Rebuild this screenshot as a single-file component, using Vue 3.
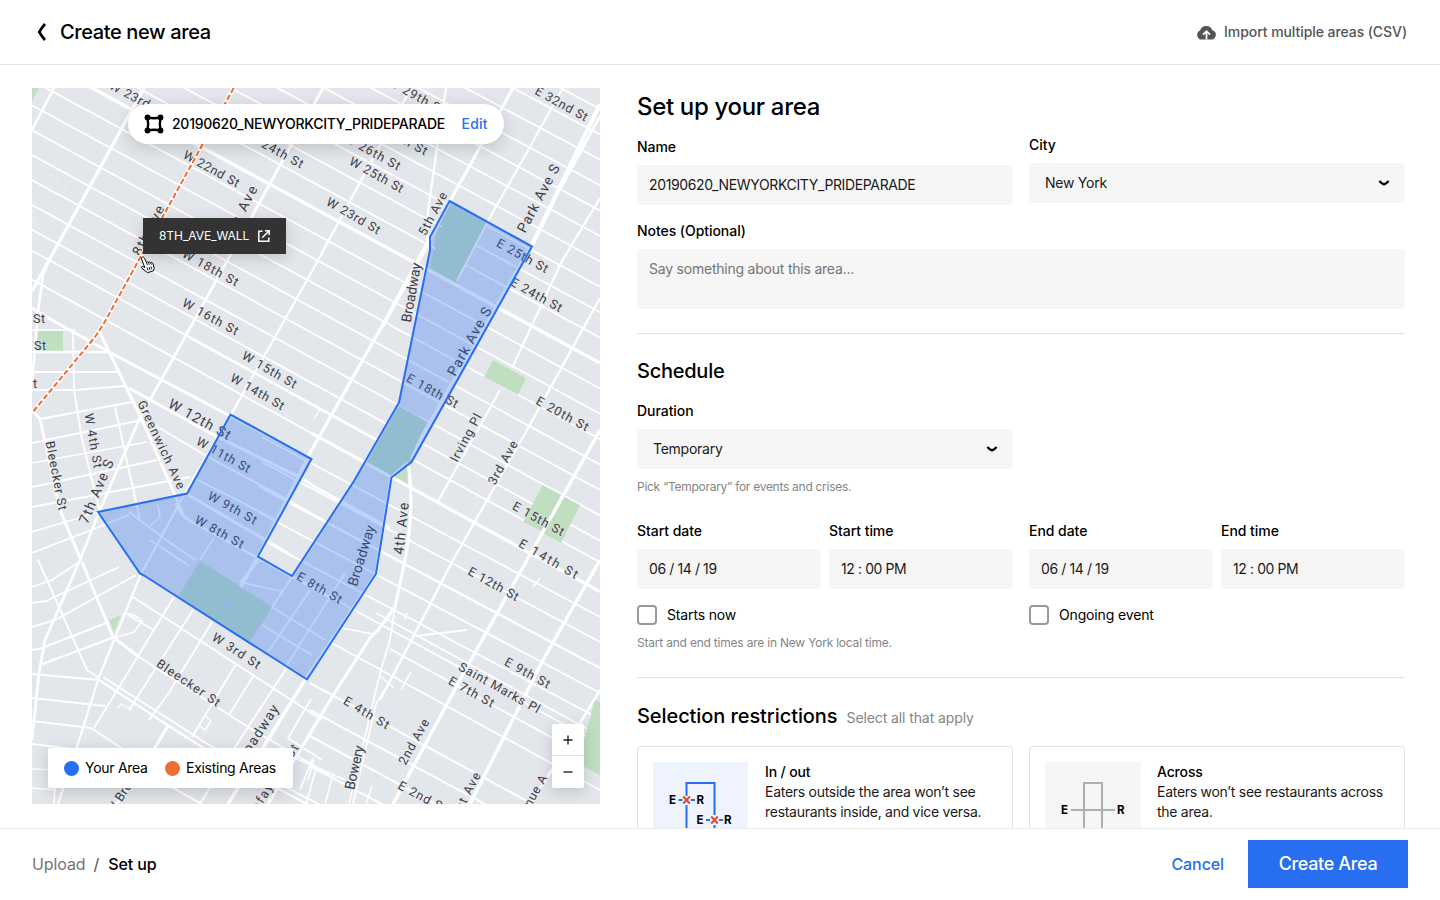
<script setup>
import { ref } from 'vue'

const notes = ref('')

// Cross streets share one bearing; only the border intercepts change
const crossStreets = []
for (let i = -10; i <= 9; i++) {
  const major = i === 0
  const shift = i === 8 ? -4 : 0
  crossStreets.push({ x1: 32, y1: 55.5 + 24.9 * i + shift, x2: 600, y2: 363 + 25.4 * i + shift, w: major ? 3.4 : 1.8 })
}
const eastStreets = [
  [312, 433.4, 591.6, 3.2], [262, 437, 617, 1.8], [262, 462, 642, 1.8], [258, 486, 668, 2.4], [258, 512, 693, 1.8],
  [262, 540, 719, 1.8], [292, 576, 744, 1.8], [376, 613, 736, 1.8], [390, 649, 764, 1.8], [330, 642, 790, 1.8],
  [310, 683, 841, 2], [310, 710, 866, 2], [310, 736, 893, 2], [310, 766, 920, 2]
].map(([x1, y1, y2, w]) => ({ x1, y1, x2: 600, y2, w }))

const roads = [
  // avenues
  ['M54 88L32 130', 3], ['M144 88L52 255L32 291', 3.8], ['M51 256L43 275L38 312L32 383', 3],
  ['M323 88L150 400L139 420L99 512L80 560L45 640L39 673L32 740', 3.2],
  ['M411 88L310 275L232 413L185 493L141 574L99 677L76 750L58 804', 2.6],
  ['M513 88L450 201L382 326L310 453L258 557L237 593', 3.8],
  ['M446 88L437 148L428 211L427 240', 2.6], ['M450 201L425 250L382 328', 3.4],
  ['M563 88L488 221L457 281', 2.4],
  ['M600 104L532 245L410 458', 5], ['M600 116L560 190', 3],
  ['M600 198L562 261L512 368M500 390L437 503', 2.4],
  ['M600 298L527 430L453 560L410 643L380 700', 2.8],
  ['M600 430L527 560L467 667L393 804', 4], ['M600 560L543 660L470 804', 4],
  ['M600 690L550 773L530 804', 3],
  ['M408 463Q415 505 405 560L395 607L378 630L370 638L332 697L268 804', 3.6],
  ['M395 607L390 640L380 673L373 703L349 804', 2], ['M393 676L376 704L353 804', 2],
  ['M376 574L305 680L228 804', 4],
  ['M399 403L366 462L310 550L270 610', 2.4], ['M409 458L391 478L386 510L376 574', 3.4],
  ['M416 636L467 630', 2.2], ['M342 628L372 634', 2], ['M401 690L411 672', 1.8], ['M380 676L394 688', 1.8],
  // diagonals and the village grid
  ['M32 308L52 320L109 352L232 417L312 459', 3.6], ['M189 337L377 440', 3],
  ['M100 333L142 420L175 495L183 515', 3.6],
  ['M129 388L210 433L299 477L322 491L390 528', 3.6], ['M146 420L210 458L290 501', 2.2],
  ['M185 493L262 538L292 556', 3.6], ['M176 503Q180 517 194 523L335 600', 3], ['M210 458L285 498L330 524', 2.2],
  ['M192 477L276 520', 2], ['M32 330L75 330', 2], ['M32 352L110 352', 3], ['M32 372L119 372', 2.2],
  ['M32 390L75 390L125 386', 2.4], ['M40 419L132 402', 2.2], ['M32 443L142 420', 2.2], ['M32 463L147 442', 2],
  ['M32 487L157 460', 2.2], ['M32 507L190 477', 2.2], ['M32 532L99 512', 2], ['M32 553L99 527L129 515', 2],
  ['M73 331L74 390L82 440L100 512', 2.2], ['M115 407L140 520', 2.2], ['M32 410L40 419L60 510L80 558', 3.4],
  ['M82 562L113 637L139 657', 3.4], ['M113 637L139 657L248 727L330 775', 2.2],
  ['M32 587L52 580L79 562', 2], ['M32 603L46 601L119 567', 2.2], ['M32 627L55 620L136 575', 2.2],
  ['M32 650L42 648L109 622', 2.2], ['M40 665L112 638', 2.2], ['M38 560L87 670L99 678', 2.2],
  ['M32 674L99 680L175 730L202 747L275 787L322 812', 2.6], ['M103 677L178 725L206 743L280 784L322 806', 2.2],
  ['M32 698L105 706', 2.2], ['M32 721L91 728L132 755', 2.2], ['M32 744L80 750', 2.2], ['M32 769L60 770', 2], ['M32 788L56 790', 2], ['M56 770L54 804', 2],
  ['M174 597L94 728', 2.2], ['M193 610L129 710', 2.2], ['M212 622L168 694L149 720', 2.2],
  ['M168 726L135 780L116 804', 3.6], ['M236 664L192 737', 2.2], ['M254 675L229 715', 2], ['M286 669L220 770L200 804', 2.2],
  ['M133 597L322 720', 2.2], ['M128 615L154 630', 2], ['M122 615Q132 611 142 621L134 632L114 638', 2],
  ['M205 715L211 721L205 730L198 725', 1.6], ['M118 708L121 704L132 710', 1.6],
  ['M311 699L288 738L322 760', 2], ['M300 790L313 758M316 769L306 804', 2], ['M150 775L230 820', 2.4], ['M295 758L345 780M310 765L338 777', 2.2],
  ['M333 775L325 804M372 786L366 804M314 760L308 780', 1.8],
  // inside the village area
  ['M150 540L188 565', 2], ['M129 512L173 545L196 560', 2], ['M158 505L160 517L150 526', 1.8],
  ['M214 538L200 560', 1.8], ['M260 560L240 582L284 592', 1.8], ['M272 607L325 640', 2.2], ['M262 625L312 655', 2.2],
  ['M310 590L268 652', 2.2], ['M345 573L285 668', 2], ['M540 578L533 587M408 613L404 619M321 408L314 419', 1.6]
].map(([d, w]) => ({ d, w: w * 0.86 }))

const faintPaths = [
  'M63 163l7 4-3 6M46 188l4-13 8 3-1 5 9 4-5 10-13-6M32 210l4 5-3 7 11 5',
  'M474 500l7-12M469 517l9-16M457 768l3-9 8 4M532 768l7-13M532 783l6-12M324 712l11 6-2 4M572 213l8 3-2 6'
]

const parks = [
  '32,88 39,88 32,101', '38,331 63,331 63,351 36,351', '449,203 488,223 457,283 430,268 436,235',
  '493,360 526,378 518,395 484,377', '399,406 427,421 411,461 391,476 366,463', '393,478 407,467 408,486',
  '543,485 561,495 542,531 523,522', '563,496 580,505 561,543 544,534', '200,561 272,607 249,642 178,597',
  '109,620 121,615 114,632', '595,700 600,702 600,775 578,763'
]

// label text, centre x, centre y, angle, length
const labels = [
  ['W 23rd St', 137, 98, 28, 61], ['W 22nd St', 211, 168, 29, 62], ['W 24th St', 275, 149, 29, 62], ['W 29th St', 416, 95, 29, 62],
  ['W 26th St', 372, 151, 29, 62], ['W 27th St', 399, 136, 29, 62], ['W 25th St', 376, 174, 29, 60], ['W 23rd St', 353, 215, 30, 60], ['E 32nd St', 561, 103, 29, 58],
  ['W 18th St', 210, 267, 29, 62], ['W 16th St', 210, 316, 29, 62], ['W 15th St', 269, 369, 30, 61], ['W 14th St', 257, 391, 30, 60],
  ['W 12th St', 199, 419, 29, 69], ['W 11th St', 223, 454, 29, 60], ['W 9th St', 232, 507, 29, 54], ['W 8th St', 219, 531, 29, 54],
  ['E 25th St', 522, 255, 29, 57], ['E 24th St', 536, 294, 29, 57], ['E 18th St', 432, 390, 29, 57], ['E 20th St', 562, 413, 29, 58],
  ['E 15th St', 538, 518, 29, 57], ['E 14th St', 548, 558, 30, 66], ['E 12th St', 493, 583, 29, 56], ['E 9th St', 527, 672, 29, 50],
  ['Saint Marks Pl', 499, 687, 29, 91], ['E 7th St', 471, 691, 29, 50], ['E 4th St', 366, 712, 31, 51], ['E 2nd St', 422, 796, 28, 53],
  ['E 8th St', 319, 587, 30, 50], ['W 3rd St', 236, 650, 33, 55], ['Bleecker St', 188, 682, 34, 74], ['Bleecker St', 56, 475, 79, 70],
  ['Greenwich Ave', 161, 444, 65, 96], ['W 4th St', 93, 440, 80, 55], ['7th Ave S', 96, 491, -67, 68],
  ['8th Ave', 148, 230, -63, 54], ['7th Ave', 240, 212, -63, 58], ['5th Ave', 432, 213, -62, 47], ['Park Ave S', 538, 198, -62, 75],
  ['Park Ave S', 469, 341, -61, 76], ['Broadway', 411, 292, -80, 60], ['Broadway', 361, 555, -73, 63], ['Irving Pl', 465, 437, -62, 53],
  ['3rd Ave', 502, 462, -61, 48], ['4th Ave', 401, 528, -84, 52], ['2nd Ave', 413, 741, -61, 50], ['Bowery', 354, 767, -77, 45],
  ['1st Ave', 465, 794, -62, 49], ['Avenue A', 529, 800, -61, 57], ['Broadway', 256, 735, -57, 70], ['Lafayette St', 272, 780, -57, 84],
  ['W Broadway', 129, 781, -57, 74]
].map(([t, x, y, a, len]) => ({ t, x: x + 0.6, y: y + 0.6, a, len, big: len / t.length > 7.4 }))
const edgeLabels = [['St', 33, 323], ['St', 34, 350], ['t', 33, 388]]

const schedule = [
  { check: 'Starts now', fields: [{ label: 'Start date', value: '06 / 14 / 19' }, { label: 'Start time', value: '12 : 00 PM' }] },
  { check: 'Ongoing event', fields: [{ label: 'End date', value: '06 / 14 / 19' }, { label: 'End time', value: '12 : 00 PM' }] }
]
</script>

<template>
  <div class="page">
    <header class="topbar">
      <svg class="back" width="10" height="18" viewBox="0 0 10 18"><path d="M9 1Q5.800 4.500 3.300 9Q5.800 13.500 9 17" fill="none" stroke="#000" stroke-width="2.600" /></svg>
      <h1>Create new area</h1>
      <button class="import">
        <svg width="19" height="15" viewBox="0 0 19 15">
          <path d="M5 14.600A4.700 4.700 0 0 1 3 5.600 6.500 6.500 0 0 1 15.300 5.200 4.800 4.800 0 0 1 14.400 14.600Z" fill="#545454" />
          <path d="M9.500 14.600V6.500M6 9.700L9.500 6.200l3.500 3.500" fill="none" stroke="#fff" stroke-width="1.700" />
        </svg>
        <span>Import multiple areas (CSV)</span>
      </button>
    </header>

    <main class="body">
      <section class="map">
        <svg class="canvas" width="568" height="716" viewBox="32 88 568 716">
          <rect x="32" y="88" width="568" height="716" fill="#e3e6eb" />
          <polygon v-for="p in parks" :key="p" :points="p" fill="#c0dfc1" />
          <g fill="none" stroke="#ebebeb" stroke-width="1.2"><path v-for="p in faintPaths" :key="p" :d="p" /></g>
          <defs>
            <clipPath id="midtown">
              <path d="M32 88H600V600L410 500L391 476L366 463L399 406L427 421L399 403L377 443L312 459L232 413L109 352L52 320L32 308ZM449 203L430 268L457 283L488 223ZM493 360L484 377L518 395L526 378ZM543 485L523 522L561 543L580 505Z" clip-rule="evenodd" />
            </clipPath>
          </defs>
          <g stroke="#fff" clip-path="url(#midtown)">
            <line v-for="(s, i) in crossStreets" :key="i" :x1="s.x1" :y1="s.y1" :x2="s.x2" :y2="s.y2" :stroke-width="s.w" />
          </g>
          <g stroke="#fff">
            <line v-for="(s, i) in eastStreets" :key="i" :x1="s.x1" :y1="s.y1" :x2="s.x2" :y2="s.y2" :stroke-width="s.w" />
          </g>
          <g fill="none" stroke="#fff" stroke-linejoin="round">
            <path v-for="r in roads" :key="r.d" :d="r.d" :stroke-width="r.w" />
          </g>
          <polygon points="200,561 272,607 249,642 178,597" fill="#c0dfc1" />
          <polygon points="398,407 426,422 410,459 391,475 367,462" fill="#c0dfc1" />
          <polygon points="595,700 600,702 600,775 578,763" fill="#c0dfc1" />
          <circle cx="228" cy="603" r="2.500" fill="#b7d5fb" />
          <g class="labels">
            <text v-for="(l, i) in labels" :key="i" :class="{ big: l.big }" :transform="`translate(${l.x} ${l.y}) rotate(${l.a})`" y="4.500" :textLength="l.len">{{ l.t }}</text>
            <text v-for="(l, i) in edgeLabels" :key="'e' + i" class="edge" :x="l[1]" :y="l[2]">{{ l[0] }}</text>
          </g>
          <path d="M233.700 88L103 325L95 337L32 413" fill="none" stroke="#fff" stroke-width="4.200" />
          <path d="M233.700 88L103 325L95 337L32 413" fill="none" stroke="#ed6e33" stroke-width="2" stroke-dasharray="5.500 2.500" />
          <path d="M449.500 201L532 246.500L411.500 462L391.500 477.500L376 574L307 679.500L144 575.500L140 573.500L98 512L187 493.500L230.500 414.500L311.500 459L258 556.500L292 576L354 481L399 402.500L430 250V237Z" fill="#276ef1" fill-opacity=".3" stroke="#276ef1" stroke-width="2" />
        </svg>

        <div class="area-pill">
          <svg width="20" height="20" viewBox="0 0 20 20">
            <path d="M3.500 3.500Q10 5 16.500 3.500Q15.200 10 16.500 16.500Q10 15 3.500 16.500Q4.800 10 3.500 3.500Z" fill="none" stroke="#000" stroke-width="2.400" />
            <circle cx="3.500" cy="3.500" r="2.900" /><circle cx="16.500" cy="3.500" r="2.900" /><circle cx="3.500" cy="16.500" r="2.900" /><circle cx="16.500" cy="16.500" r="2.900" />
          </svg>
          <span class="pill-name">20190620_NEWYORKCITY_PRIDEPARADE</span>
          <a>Edit</a>
        </div>

        <div class="tooltip">
          <span>8TH_AVE_WALL</span>
          <svg width="12" height="12" viewBox="0 0 12 12"><path d="M4.500 1.200H.8V11.200H10.800V7.500M7 .8H11.200V5M11 1L4.200 7.800" fill="none" stroke="#fff" stroke-width="1.500" /></svg>
        </div>
        <svg class="cursor" width="16" height="18" viewBox="0 0 16 18">
          <path d="M2.300 1.200C3.300.7 4.200 1.500 4.600 2.500L6.400 6.500C7 5.600 8 5.700 8.400 6.400C9.100 5.600 10.200 5.900 10.600 6.700C11.500 6.100 12.500 6.600 12.900 7.600L14 11C14.300 12.200 13.900 13.700 13.500 14.800L7.500 16.700C6 15.600 4.300 14 2 12.300C.7 11.200 1.800 10 3.300 10.600L4.800 11.500L1.500 3C1.200 2.300 1.500 1.600 2.300 1.200Z" fill="#fff" stroke="#000" />
          <path d="M6.400 6.500l1 2.600M8.400 6.400l1 2.300M10.600 6.700l.8 2M7 11.500l1 3M9 11l1 3M11 10.500l.8 2.800" fill="none" stroke="#000" stroke-width=".9" />
        </svg>

        <div class="legend">
          <i class="dot mine"></i><span class="your">Your Area</span>
          <i class="dot existing"></i><span class="exist">Existing Areas</span>
        </div>
        <div class="zoom">
          <button aria-label="Zoom in"><svg width="10" height="10"><path d="M5 .5V9.500M.5 5H9.500" stroke="#222" stroke-width="1.400" /></svg></button>
          <button aria-label="Zoom out"><svg width="10" height="10"><path d="M.5 5H9.500" stroke="#222" stroke-width="1.400" /></svg></button>
        </div>
      </section>

      <section class="form">
        <h2 class="title">Set up your area</h2>
        <div class="cols first">
          <div class="name-col">
            <label>Name</label>
            <div class="field caps">20190620_NEWYORKCITY_PRIDEPARADE</div>
          </div>
          <div>
            <label>City</label>
            <div class="field select"><span>New York</span><svg width="12" height="8" viewBox="0 0 12 8"><path d="M1.400 1.900Q3.500 4.400 6 5.300Q8.500 4.400 10.600 1.900" fill="none" stroke="#000" stroke-width="2.300" /></svg></div>
          </div>
        </div>
        <label class="notes-label">Notes (Optional)</label>
        <textarea v-model="notes" placeholder="Say something about this area..."></textarea>
        <hr />

        <h2 class="sched">Schedule</h2>
        <label class="dur">Duration</label>
        <div class="field select half"><span class="temp">Temporary</span><svg width="12" height="8" viewBox="0 0 12 8"><path d="M1.400 1.900Q3.500 4.400 6 5.300Q8.500 4.400 10.600 1.900" fill="none" stroke="#000" stroke-width="2.300" /></svg></div>
        <p class="hint">Pick “Temporary” for events and crises.</p>
        <div class="cols dates">
          <div v-for="g in schedule" :key="g.check">
            <div class="pair">
              <div v-for="f in g.fields" :key="f.label">
                <label>{{ f.label }}</label>
                <div class="field num">{{ f.value }}</div>
              </div>
            </div>
            <div class="check"><i></i><span>{{ g.check }}</span></div>
          </div>
        </div>
        <p class="hint local">Start and end times are in New York local time.</p>
        <hr />

        <div class="sel-head"><h2>Selection restrictions</h2><span>Select all that apply</span></div>
        <div class="cols cards">
          <article class="card">
            <svg class="thumb on" width="95" height="96" viewBox="0 0 95 96">
              <path d="M33.500 96V43M33.500 34V21H61.500V53M61.500 63V96" fill="none" stroke="#276ef1" stroke-width="2" />
              <path d="M25.500 38h4M38 38h4M53 58h4M66 58h4" stroke="#276ef1" stroke-width="1.800" />
              <path d="M30.200 34.500l6.600 7M36.800 34.500l-6.600 7M58.200 54.500l6.600 7M64.800 54.500l-6.600 7" stroke="#e1483a" stroke-width="2" />
              <text x="16" y="42">E</text><text x="43.500" y="42">R</text><text x="43.500" y="62">E</text><text x="71" y="62">R</text>
            </svg>
            <div class="copy"><h3>In / out</h3><p>Eaters outside the area won’t see<br />restaurants inside, and vice versa.</p></div>
          </article>
          <article class="card">
            <svg class="thumb" width="96" height="96" viewBox="0 0 96 96">
              <path d="M39 96V21H57V96M26 48H70" fill="none" stroke="#afafaf" stroke-width="2" />
              <text x="16" y="52">E</text><text x="72" y="52">R</text>
            </svg>
            <div class="copy"><h3>Across</h3><p>Eaters won’t see restaurants across<br />the area.</p></div>
          </article>
        </div>
      </section>
    </main>

    <footer class="bottombar">
      <nav><span class="muted">Upload</span><span class="slash">/</span><b>Set up</b></nav>
      <button class="cancel">Cancel</button>
      <button class="create">Create Area</button>
    </footer>
  </div>
</template>

<style>
body { margin: 0; overflow: hidden; background: #fff; }
</style>

<style scoped>
.page { width: 1440px; height: 900px; display: flex; flex-direction: column; overflow: hidden; background: #fff; color: #000; font: 400 14px/20px Inter, "Liberation Sans", sans-serif; letter-spacing: -.15px; }
.page * { box-sizing: border-box; }
h1, h2, h3, p { margin: 0; font-weight: 500; }
button { border: 0; padding: 0; background: none; font: inherit; letter-spacing: inherit; color: inherit; }
label { display: block; font-weight: 500; height: 20px; margin-bottom: 8px; letter-spacing: -.05px; }
.topbar { height: 65px; flex: none; border-bottom: 1px solid #e2e2e2; display: flex; align-items: center; padding: 0 33px 0 36px; }
.back { margin-left: -.5px; }
h1 { font-size: 20px; line-height: 28px; margin-left: 14.5px; letter-spacing: -.38px; }
.import { margin-left: auto; display: flex; align-items: center; gap: 8px; color: #545454; font-weight: 500; letter-spacing: -.07px; }
.body { height: 763px; flex: none; display: flex; overflow: hidden; }
.map { position: relative; margin: 23px 37px 0 32px; width: 568px; height: 716px; flex: none; overflow: hidden; }
.canvas { display: block; }
.labels text { font: 400 12.500px Roboto, sans-serif; fill: #3c4046; text-anchor: middle; stroke: #e3e6eb; stroke-width: 1.500px; stroke-opacity: .7; paint-order: stroke; letter-spacing: 0; }
.labels text.big { font-size: 14px; }
.labels text.edge { text-anchor: start; letter-spacing: .5px; }
.area-pill { position: absolute; left: 96px; top: 16px; width: 376px; height: 40px; border-radius: 20px; background: #fff; box-shadow: 0 4px 16px rgba(0, 0, 0, .16); display: flex; align-items: center; padding-left: 16px; font-weight: 500; }
.pill-name { margin-left: 8px; width: 289.5px; white-space: nowrap; letter-spacing: -.26px; }
.area-pill a { color: #276ef1; letter-spacing: .2px; }
.tooltip { position: absolute; left: 111px; top: 130px; width: 143px; height: 36px; background: #333; color: #fff; font-size: 12px; display: flex; align-items: center; padding-left: 16px; box-shadow: 0 4px 16px rgba(0, 0, 0, .16); }
.tooltip span { width: 99px; letter-spacing: -.07px; }
.cursor { position: absolute; left: 108px; top: 168px; }
.legend { position: absolute; left: 16px; top: 660px; width: 245px; height: 40px; background: #fff; border-radius: 2px; box-shadow: 0 4px 16px rgba(0, 0, 0, .16); display: flex; align-items: center; padding-left: 16px; letter-spacing: -.28px; }
.dot { width: 15px; height: 15px; border-radius: 50%; margin-right: 6px; flex: none; }
.mine { background: #276ef1; }
.existing { background: #ed6e33; }
.your { width: 80px; }
.zoom { position: absolute; left: 520px; top: 636px; width: 32px; height: 64px; background: #fff; border-radius: 2px; box-shadow: 0 4px 16px rgba(0, 0, 0, .16); }
.zoom button { display: grid; place-items: center; width: 32px; height: 32px; }
.zoom button:first-child { border-bottom: 1px solid #e2e2e2; }
.form { width: 768px; flex: none; padding-top: 26px; }
.title { font-size: 24px; line-height: 32px; letter-spacing: -.33px; }
.cols { display: grid; grid-template-columns: 376px 376px; gap: 16px; align-items: start; }
.first { margin-top: 12px; }
.name-col { padding-top: 2px; }
.field { height: 40px; border-radius: 4px; background: #f6f6f6; padding: 0 12px; line-height: 40px; color: #1a1a1a; letter-spacing: -.25px; }
.field.caps { letter-spacing: -.36px; }
.select { display: flex; align-items: center; justify-content: space-between; padding: 0 15px 0 16px; }
.half { width: 376px; }
.notes-label { margin-top: 16px; }
textarea { display: block; width: 768px; height: 60px; resize: none; border: 0; border-radius: 4px; background: #f6f6f6; padding: 10px 12px; font: inherit; letter-spacing: -.22px; outline: none; }
textarea::placeholder { color: #757575; }
hr { border: 0; height: 1px; background: #e2e2e2; margin: 24px 0 0; }
.sched { font-size: 20px; line-height: 28px; margin-top: 23px; letter-spacing: -.25px; }
.dur { margin-top: 16px; }
.hint { margin-top: 8px; font-size: 12px; font-weight: 400; color: #858585; letter-spacing: -.28px; }
.hint.local { letter-spacing: -.21px; }
.dates { margin-top: 24px; }
.pair { display: grid; grid-template-columns: 184px 184px; gap: 8px; }
.field.num { letter-spacing: -.4px; }
.check { display: flex; align-items: center; margin-top: 16px; gap: 10px; }
.check i { width: 20px; height: 20px; border: 2px solid #999; border-radius: 4px; }
.sel-head { display: flex; align-items: baseline; margin-top: 24px; height: 28px; }
.sel-head h2 { font-size: 20px; line-height: 28px; letter-spacing: -.08px; }
.sel-head span { margin-left: 9px; color: #858585; letter-spacing: -.1px; }
.cards { margin-top: 16px; }
.card { height: 128px; border: 1px solid #e2e2e2; border-radius: 4px; padding: 15px; display: flex; }
.thumb { background: #f6f6f6; border-radius: 2px; flex: none; }
.thumb.on { background: #eef3fe; margin-right: 1px; }
.thumb text { font: 700 11.500px Inter, sans-serif; }
.copy { margin-left: 16px; white-space: nowrap; }
.copy h3 { font-size: 14px; line-height: 20px; }
.copy p { font-weight: 400; color: #1a1a1a; letter-spacing: -.28px; }
.bottombar { height: 72px; flex: none; border-top: 1px solid #eee; display: flex; align-items: center; padding: 0 32px 1px; font-size: 16px; letter-spacing: -.1px; }
.muted { color: #757575; }
.slash { margin: 0 9px 0 8px; color: #545454; }
b { font-weight: 500; }
.cancel { margin-left: auto; color: #276ef1; font-weight: 500; margin-right: 24px; }
.create { width: 160px; height: 48px; background: #276ef1; color: #fff; font-size: 18px; font-weight: 500; letter-spacing: -.35px; }
</style>
